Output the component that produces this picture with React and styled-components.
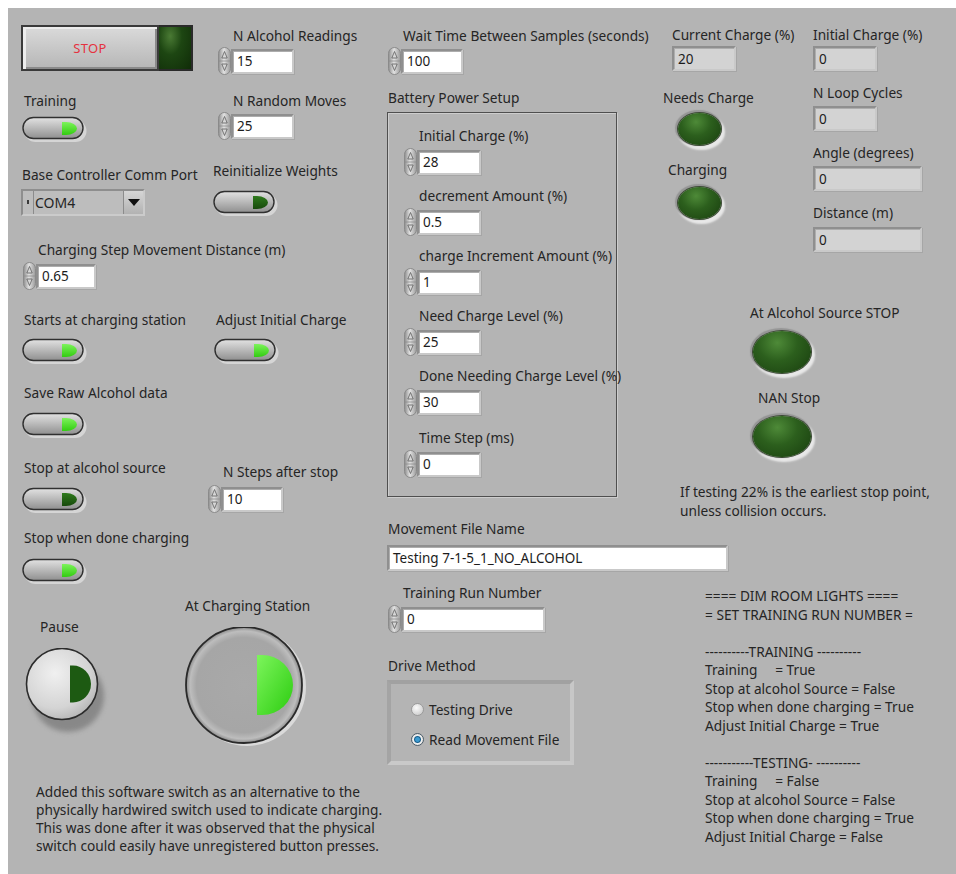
import styled, { createGlobalStyle } from "styled-components";

const GlobalStyle = createGlobalStyle`
  html, body { background: #ffffff; overflow: hidden; }
  body { margin: 8px 0 0 8px; }
`;

const Panel = styled.div`
  display: flex;
  width: 948px;
  height: 866px;
  background: #b4b4b4;
  font-family: "Noto Sans", "Open Sans", sans-serif;
  font-size: 13.7px;
  color: #252525;
  overflow: hidden;
`;

const LeftSection = styled.section`
  width: 367px;
  padding-left: 12px;
  display: flex;
  flex-direction: column;
  flex-shrink: 0;
`;

const RightArea = styled.div`
  flex: 1;
  display: flex;
  flex-direction: column;
`;

const TopBand = styled.div`
  display: flex;
  height: 512px;
  flex-shrink: 0;
`;

const MiddleTop = styled.div`
  width: 276px;
  display: flex;
  flex-direction: column;
  align-items: flex-start;
  flex-shrink: 0;
`;

const RightTop = styled.div`
  display: flex;
  flex-direction: column;
  align-items: flex-start;
`;

const StatusGrid = styled.div`
  display: flex;
  align-items: flex-start;
`;

const Column = styled.div`
  display: flex;
  flex-direction: column;
  align-items: flex-start;
  width: ${(p) => (p.$w ? `${p.$w}px` : "auto")};
  flex-shrink: 0;
`;

const BottomBand = styled.div`
  display: grid;
  grid-template-columns: 318px 1fr;
  align-items: start;
`;

const Row = styled.div`
  display: flex;
  height: ${(p) => p.$h}px;
  flex-shrink: 0;
`;

const Cell = styled.div`
  display: flex;
  flex-direction: column;
  align-items: flex-start;
  flex-shrink: 0;
  width: ${(p) => (p.$w ? `${p.$w}px` : "auto")};
  margin-top: ${(p) => p.$top || 0}px;
  margin-left: ${(p) => p.$left || 0}px;
  grid-column: ${(p) => (p.$span ? "1 / -1" : "auto")};
`;

const Label = styled.div`
  line-height: 16px;
  white-space: nowrap;
  margin-top: ${(p) => p.$top || 0}px;
  margin-left: ${(p) => p.$indent || 0}px;
  margin-bottom: ${(p) => p.$gap ?? 3}px;
`;

const FieldRow = styled.div`
  display: flex;
  align-items: center;
`;

const Box = styled.div`
  width: ${(p) => p.$w}px;
  height: ${(p) => p.$h || 25}px;
  box-sizing: border-box;
  display: flex;
  align-items: center;
  padding-left: 4px;
  background: ${(p) => (p.$readonly ? "#d3d3d3" : "#ffffff")};
  border: 2px solid;
  border-color: #8f8f8f #c9c9c9 #c9c9c9 #8f8f8f;
  box-shadow: inset 1px 1px 0 #adadad, 1px 1px 0 #a6a6a6;
  font-size: 13.5px;
  color: #1c1c1c;
  white-space: nowrap;
`;

/* numeric increment / decrement arrows */
const Spinner = () => (
  <svg width="15" height="28" viewBox="0 0 15 28" style={{ marginRight: -1 }}>
    <defs>
      <linearGradient id="spinFill" x1="0" x2="1" y1="0" y2="0">
        <stop offset="0" stopColor="#8c8c8c" />
        <stop offset="0.45" stopColor="#e2e2e2" />
        <stop offset="1" stopColor="#9a9a9a" />
      </linearGradient>
    </defs>
    <rect x="1.5" y="0.5" width="12" height="27" rx="6" fill="url(#spinFill)" stroke="#8a8a8a" />
    <line x1="2" y1="14" x2="13" y2="14" stroke="#8e8e8e" strokeWidth="0.8" />
    <path d="M4.8 11 L7.5 4.5 L10.2 11 Z" fill="#d6d6d6" stroke="#5e5e5e" strokeWidth="0.8" />
    <path d="M4.8 17 L7.5 23.5 L10.2 17 Z" fill="#d6d6d6" stroke="#5e5e5e" strokeWidth="0.8" />
  </svg>
);

const Numeric = ({ label, value, w = 63, gap = 3 }) => (
  <>
    <Label $indent={16} $gap={gap}>
      {label}
    </Label>
    <FieldRow>
      <Spinner />
      <Box $w={w}>{value}</Box>
    </FieldRow>
  </>
);

const Indicator = ({ label, value, w = 64, gap = 3 }) => (
  <>
    <Label $gap={gap}>{label}</Label>
    <Box $w={w} $readonly>
      {value}
    </Box>
  </>
);

/* horizontal slide toggle with green lamp */
const Toggle = ({ on }) => (
  <svg width="66" height="27" viewBox="0 0 66 27">
    <defs>
      <linearGradient id="tgBody" x1="0" y1="0" x2="0" y2="1">
        <stop offset="0" stopColor="#e2e2e2" />
        <stop offset="0.45" stopColor="#bdbdbd" />
        <stop offset="1" stopColor="#8f8f8f" />
      </linearGradient>
      <linearGradient id="tgOn" x1="0" y1="0" x2="0" y2="1">
        <stop offset="0" stopColor="#7cf35a" />
        <stop offset="1" stopColor="#33cc12" />
      </linearGradient>
      <linearGradient id="tgOff" x1="0" y1="0" x2="0" y2="1">
        <stop offset="0" stopColor="#2e7a1c" />
        <stop offset="1" stopColor="#184a0c" />
      </linearGradient>
    </defs>
    <rect x="2.5" y="4" width="62" height="22" rx="11" fill="#dadada" opacity="0.85" />
    <rect x="1" y="1.5" width="60" height="21" rx="10.5" fill="url(#tgBody)" stroke="#303030" strokeWidth="1.4" />
    <path d="M40 6 h4 a11 6.5 0 0 1 0 13 h-4 z" fill={on ? "url(#tgOn)" : "url(#tgOff)"} />
  </svg>
);

const ToggleControl = ({ label, on, gap = 10, indent = 2 }) => (
  <>
    <Label $indent={indent} $gap={gap}>
      {label}
    </Label>
    <Toggle on={on} />
  </>
);

const StopGroup = styled.div`
  display: flex;
  margin-left: 1px;
`;

const StopButton = styled.div`
  width: 138px;
  height: 46px;
  box-sizing: border-box;
  display: flex;
  align-items: center;
  justify-content: center;
  border: 2px solid #3a3a3a;
  background: linear-gradient(#dadada, #c6c6c6 55%, #b6b6b6);
  box-shadow: inset 3px 2px 0 #ececec, inset -2px -2px 0 #8a8a8a;
  color: #e5323f;
  font-size: 13px;
  letter-spacing: 0.4px;
`;

const StopLamp = styled.div`
  width: 34px;
  height: 46px;
  box-sizing: border-box;
  border: 2px solid #2a2a2a;
  border-left: none;
  background: radial-gradient(ellipse at 35% 22%, #4a7a34 0%, #1d4612 40%, #102c08 100%);
`;

const Ring = styled.div`
  display: flex;
  width: 124px;
  height: 27px;
  box-sizing: border-box;
  border: 2px solid;
  border-color: #8e8e8e #cbcbcb #cbcbcb #8e8e8e;
  background: #bdbdbd;
`;

const RingTick = styled.div`
  width: 10px;
  display: flex;
  align-items: center;
  justify-content: center;
  &::before {
    content: "";
    width: 2px;
    height: 4px;
    margin-top: -2px;
    background: #3a3a3a;
  }
`;

const RingText = styled.div`
  flex: 1;
  display: flex;
  align-items: center;
  padding-left: 1px;
  border-left: 1px solid #8c8c8c;
  font-size: 14px;
`;

const RingArrow = styled.div`
  width: 19px;
  display: flex;
  align-items: center;
  justify-content: center;
  border-left: 1px solid #8c8c8c;
  background: linear-gradient(#d6d6d6, #b2b2b2);
  &::before {
    content: "";
    border-left: 6px solid transparent;
    border-right: 6px solid transparent;
    border-top: 7px solid #111;
  }
`;

const Led = styled.div`
  width: ${(p) => p.$w}px;
  height: ${(p) => p.$h}px;
  margin-left: ${(p) => p.$left || 0}px;
  border-radius: 50%;
  background: radial-gradient(ellipse at 42% 28%, #4e8a38 0%, #2c5f1d 42%, #183d0e 100%);
  box-shadow: 0 0 0 1px #3d4c36, -1px -1px 1px 2px #959595, 2px 3px 2px 2px #e8e8e8;
`;

const PauseButton = () => (
  <svg width="86" height="90" viewBox="0 0 86 90">
    <defs>
      <radialGradient id="pauseFill" cx="0.4" cy="0.35" r="0.7">
        <stop offset="0" stopColor="#f0f0f0" />
        <stop offset="0.7" stopColor="#d4d4d4" />
        <stop offset="1" stopColor="#b4b4b4" />
      </radialGradient>
      <filter id="pauseBlur">
        <feGaussianBlur stdDeviation="2.5" />
      </filter>
    </defs>
    <circle cx="43" cy="48" r="36" fill="#7e7e7e" filter="url(#pauseBlur)" opacity="0.8" />
    <circle cx="37" cy="36" r="35.5" fill="url(#pauseFill)" stroke="#2c2c2c" strokeWidth="1.6" />
    <path d="M45 17.5 h3 a18 18.5 0 0 1 0 37 h-3 z" fill="#1d5a12" />
  </svg>
);

const ChargeButton = () => (
  <svg width="126" height="124" viewBox="0 0 126 124">
    <defs>
      <radialGradient id="chargeFill" cx="0.5" cy="0.5" r="0.5">
        <stop offset="0" stopColor="#a9a9a9" />
        <stop offset="0.82" stopColor="#a6a6a6" />
        <stop offset="0.93" stopColor="#bdbdbd" />
        <stop offset="1" stopColor="#8a8a8a" />
      </radialGradient>
      <linearGradient id="chargeLamp" x1="0" y1="0" x2="1" y2="1">
        <stop offset="0" stopColor="#7df55c" />
        <stop offset="1" stopColor="#2ccc10" />
      </linearGradient>
    </defs>
    <circle cx="62" cy="60" r="59" fill="#dadada" />
    <circle cx="59" cy="58" r="58" fill="url(#chargeFill)" stroke="#2a2a2a" strokeWidth="1.8" />
    <path d="M72 28 h5 a31 30 0 0 1 0 60 h-5 z" fill="url(#chargeLamp)" />
  </svg>
);

const BatteryFrame = styled.div`
  width: 230px;
  height: 385px;
  box-sizing: border-box;
  border: 1px solid #4f4f4f;
  box-shadow: inset 1px 1px 0 #cdcdcd, 1px 1px 0 #cdcdcd;
  padding: 15px 0 0 15px;
  display: flex;
  flex-direction: column;
  align-items: flex-start;
`;

const Group = styled.div`
  display: flex;
  flex-direction: column;
  align-items: flex-start;
  margin-bottom: ${(p) => p.$space ?? 12}px;
`;

const DriveFrame = styled.div`
  width: 187px;
  height: 85px;
  box-sizing: border-box;
  border: 4px solid;
  border-color: #a1a1a1 #c7c7c7 #c9c9c9 #a4a4a4;
  padding: 17px 0 0 20px;
  display: flex;
  flex-direction: column;
  gap: 14px;
`;

const RadioRow = styled.div`
  display: flex;
  align-items: center;
  gap: 5px;
  height: 16px;
  white-space: nowrap;
`;

const RadioDot = styled.span`
  width: 13px;
  height: 13px;
  border-radius: 50%;
  box-sizing: border-box;
  border: 1px solid ${(p) => (p.$on ? "#4c5c68" : "#9a9a9a")};
  background: ${(p) =>
    p.$on
      ? "radial-gradient(circle, #3b9ad0 0 25%, #145b88 38%, #f2f2f2 52%, #c6c6c6 100%)"
      : "radial-gradient(circle at 40% 35%, #fbfbfb, #c2c2c2)"};
`;

const Note = styled.p`
  margin: ${(p) => p.$top || 0}px 0 0 ${(p) => p.$left || 0}px;
  line-height: ${(p) => p.$lh || 18}px;
  white-space: ${(p) => (p.$pre ? "pre" : "nowrap")};
`;

export default function App() {
  return (
    <>
      <GlobalStyle />
      <Panel>
        <LeftSection>
          <Row $h={78}>
            <Cell $top={17} $w={197}>
              <StopGroup>
                <StopButton>STOP</StopButton>
                <StopLamp />
              </StopGroup>
            </Cell>
            <Cell $top={20}>
              <Numeric label="N Alcohol Readings" value="15" />
            </Cell>
          </Row>

          <Row $h={72}>
            <Cell $top={7} $left={2} $w={195}>
              <ToggleControl label="Training" on gap={7} />
            </Cell>
            <Cell $top={7}>
              <Numeric label="N Random Moves" value="25" />
            </Cell>
          </Row>

          <Row $h={78}>
            <Cell $top={9} $left={1} $w={192}>
              <Label $indent={1} $gap={6}>
                Base Controller Comm Port
              </Label>
              <Ring>
                <RingTick />
                <RingText>COM4</RingText>
                <RingArrow />
              </Ring>
            </Cell>
            <Cell $top={5}>
              <ToggleControl label="Reinitialize Weights" indent={0} gap={11} />
            </Cell>
          </Row>

          <Row $h={64}>
            <Cell $top={6} $left={2}>
              <Numeric label="Charging Step Movement Distance (m)" value="0.65" w={60} gap={4} />
            </Cell>
          </Row>

          <Row $h={76}>
            <Cell $top={12} $left={2} $w={192}>
              <ToggleControl label="Starts at charging station" on />
            </Cell>
            <Cell $top={12}>
              <ToggleControl label="Adjust Initial Charge" on />
            </Cell>
          </Row>

          <Row $h={74}>
            <Cell $top={9} $left={2}>
              <ToggleControl label="Save Raw Alcohol data" on gap={11} />
            </Cell>
          </Row>

          <Row $h={72}>
            <Cell $top={10} $left={2} $w={185}>
              <ToggleControl label="Stop at alcohol source" gap={11} />
            </Cell>
            <Cell $top={14}>
              <Numeric label="N Steps after stop" value="10" w={62} gap={5} />
            </Cell>
          </Row>

          <Row $h={70}>
            <Cell $top={8} $left={2}>
              <ToggleControl label="Stop when done charging" on gap={12} />
            </Cell>
          </Row>

          <Row $h={168}>
            <Cell $top={27} $left={5} $w={160}>
              <Label $indent={15} $gap={13}>
                Pause
              </Label>
              <PauseButton />
            </Cell>
            <Cell $top={6}>
              <Label $gap={13}>At Charging Station</Label>
              <ChargeButton />
            </Cell>
          </Row>

          <Note $top={23} $left={16}>
            Added this software switch as an alternative to the
            <br />
            physically hardwired switch used to indicate charging.
            <br />
            This was done after it was observed that the physical
            <br />
            switch could easily have unregistered button presses.
          </Note>
        </LeftSection>

        <RightArea>
          <TopBand>
            <MiddleTop>
              <Cell $top={20}>
                <Numeric label="Wait Time Between Samples (seconds)" value="100" w={62} />
              </Cell>
              <Label $top={15} $indent={1} $gap={6}>
                Battery Power Setup
              </Label>
              <BatteryFrame>
                <Group>
                  <Numeric label="Initial Charge (%)" value="28" w={64} gap={4} />
                </Group>
                <Group>
                  <Numeric label="decrement Amount (%)" value="0.5" w={64} gap={4} />
                </Group>
                <Group>
                  <Numeric label="charge Increment Amount (%)" value="1" w={64} gap={4} />
                </Group>
                <Group>
                  <Numeric label="Need Charge Level (%)" value="25" w={64} gap={4} />
                </Group>
                <Group $space={14}>
                  <Numeric label="Done Needing Charge Level (%)" value="30" w={64} gap={4} />
                </Group>
                <Group>
                  <Numeric label="Time Step (ms)" value="0" w={64} gap={4} />
                </Group>
              </BatteryFrame>
            </MiddleTop>

            <RightTop>
              <StatusGrid>
                <Column $w={150}>
                  <Cell $top={19} $left={9}>
                    <Indicator label="Current Charge (%)" value="20" />
                  </Cell>
                  <Label $top={19} $gap={7}>
                    Needs Charge
                  </Label>
                  <Led $w={43} $h={32} $left={15} />
                  <Label $top={17} $indent={5} $gap={9}>
                    Charging
                  </Label>
                  <Led $w={43} $h={32} $left={15} />
                </Column>
                <Column>
                  <Cell $top={19}>
                    <Indicator label="Initial Charge (%)" value="0" />
                  </Cell>
                  <Cell $top={14}>
                    <Indicator label="N Loop Cycles" value="0" gap={5} />
                  </Cell>
                  <Cell $top={14}>
                    <Indicator label="Angle (degrees)" value="0" w={109} gap={5} />
                  </Cell>
                  <Cell $top={14}>
                    <Indicator label="Distance (m)" value="0" w={109} gap={6} />
                  </Cell>
                </Column>
              </StatusGrid>

              <Label $top={53} $indent={87} $gap={10}>
                At Alcohol Source STOP
              </Label>
              <Led $w={58} $h={48} $left={90} />
              <Label $top={17} $indent={95} $gap={10}>
                NAN Stop
              </Label>
              <Led $w={58} $h={48} $left={90} />
              <Note $top={25} $left={17} $lh={19}>
                If testing 22% is the earliest stop point,
                <br />
                unless collision occurs.
              </Note>
            </RightTop>
          </TopBand>

          <BottomBand>
            <Cell $span $top={1}>
              <Label $indent={1} $gap={8}>
                Movement File Name
              </Label>
              <Box $w={341} $h={26}>
                Testing 7-1-5_1_NO_ALCOHOL
              </Box>
            </Cell>

            <Cell $top={14}>
              <Numeric label="Training Run Number" value="0" w={144} gap={4} />
              <Label $top={25} $indent={1} $gap={6}>
                Drive Method
              </Label>
              <DriveFrame>
                <RadioRow>
                  <RadioDot />
                  Testing Drive
                </RadioRow>
                <RadioRow>
                  <RadioDot $on />
                  Read Movement File
                </RadioRow>
              </DriveFrame>
            </Cell>

            <Note $pre $top={16} $lh={18.5}>
              {`==== DIM ROOM LIGHTS ====
= SET TRAINING RUN NUMBER =

----------TRAINING ----------
Training     = True
Stop at alcohol Source = False
Stop when done charging = True
Adjust Initial Charge = True

-----------TESTING- ----------
Training     = False
Stop at alcohol Source = False
Stop when done charging = True
Adjust Initial Charge = False`}
            </Note>
          </BottomBand>
        </RightArea>
      </Panel>
    </>
  );
}
